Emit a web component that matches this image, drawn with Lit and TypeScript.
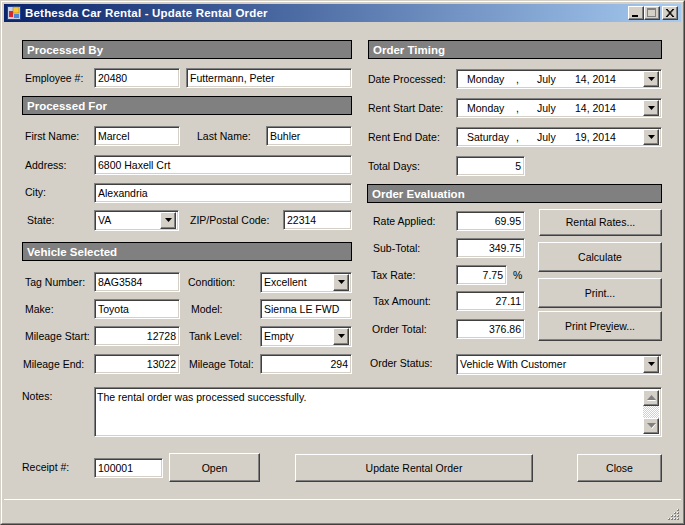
import { LitElement, html, css, svg } from "lit";
import { customElement } from "lit/decorators.js";

const arrow = html`<svg width="7" height="4" viewBox="0 0 7 4"><polygon points="0,0 7,0 3.5,4" fill="#000"></polygon></svg>`;

@customElement("app-root")
export class AppRoot extends LitElement {
  static styles = css`
    :host {
      display: block;
      width: 685px;
      height: 525px;
      box-sizing: border-box;
      border: 1px solid;
      border-color: #d4d0c8 #404040 #404040 #d4d0c8;
      background: #d4d0c8;
      font: 10.5px/13px "Liberation Sans", Arial, sans-serif;
      color: #000;
      overflow: hidden;
    }
    .win {
      height: 100%;
      box-sizing: border-box;
      border: 1px solid;
      border-color: #fff #808080 #808080 #fff;
      padding: 2px;
      display: flex;
      flex-direction: column;
    }
    .titlebar {
      height: 18px;
      flex: none;
      display: flex;
      align-items: center;
      background: linear-gradient(90deg, #0a246a, #a6caf0);
      padding: 0 3px 0 3px;
    }
    .app-icon { width: 14px; height: 14px; flex: none; }
    .title {
      margin-left: 4px;
      color: #fff;
      font: bold 11.5px/18px "Liberation Sans", Arial, sans-serif;
      letter-spacing: 0.2px;
      white-space: nowrap;
    }
    .wbtns { margin-left: auto; display: flex; }
    .wbtn { width: 16px; height: 14px; box-sizing: border-box; display: block; }
    .wbtn.close { margin-left: 2px; }
    .raised {
      background: #d4d0c8;
      border: 1px solid;
      border-color: #fff #404040 #404040 #fff;
      box-shadow: inset -1px -1px 0 #808080;
    }
    .sunken {
      background: #fff;
      box-sizing: border-box;
      border: 1px solid;
      border-color: #808080 #fff #fff #808080;
      box-shadow: inset 1px 1px 0 #404040, inset -1px -1px 0 #d4d0c8;
    }
    .form { padding: 18px 19px 0 18px; flex: 1; min-height: 0; }
    .cols { display: flex; gap: 16px; }
    .left { width: 330px; flex: none; }
    .right { width: 294px; flex: none; }
    .head {
      height: 19px;
      box-sizing: border-box;
      background: #808080;
      border: 1px solid #000;
      color: #fff;
      font: bold 11.5px/18px "Liberation Sans", Arial, sans-serif;
      padding-left: 4px;
      white-space: nowrap;
    }
    .head.wide { margin-left: -1px; }
    .row { display: flex; align-items: center; height: 20px; }
    .lbl { flex: none; white-space: nowrap; box-sizing: border-box; }
    .l72 { width: 72px; }
    .l88 { width: 88px; }
    .l86 { width: 86px; }
    .l80 { width: 80px; }
    .l104 { width: 104px; }
    .p1 { padding-left: 1px; }
    .p2 { padding-left: 2px; }
    .p3 { padding-left: 3px; }
    .p4 { padding-left: 4px; }
    .p5 { padding-left: 5px; }
    .p8 { padding-left: 8px; }
    .p9 { padding-left: 9px; }
    .p11 { padding-left: 11px; }
    .p17 { padding-left: 17px; }
    .up1 { margin-top: -2px; }
    .m3 { margin-top: 3px; }
    .m6 { margin-top: 6px; }
    .m7 { margin-top: 7px; }
    .m8 { margin-top: 8px; }
    .m9 { margin-top: 9px; }
    .m10 { margin-top: 10px; }
    .m11 { margin-top: 11px; }
    .m12 { margin-top: 12px; }
    .m13 { margin-top: 13px; }
    .f {
      height: 20px;
      flex: none;
      line-height: 16px;
      padding: 1px 3px 0 3px;
      white-space: nowrap;
      overflow: hidden;
    }
    .grow { flex: 1; min-width: 0; }
    .w86 { width: 86px; }
    .w85 { width: 85px; }
    .w92 { width: 92px; }
    .w69 { width: 69px; }
    .w51 { width: 51px; }
    .num { text-align: right; padding-right: 3px; }
    .gap6 { margin-left: 6px; }
    .select {
      display: flex;
      align-items: center;
      justify-content: space-between;
      padding: 0 2px 0 3px;
      height: 21px;
    }
    .ddb {
      width: 16px;
      height: 17px;
      flex: none;
      box-sizing: border-box;
      display: flex;
      align-items: center;
      justify-content: center;
    }
    .date {
      width: 206px;
      height: 20px;
      padding: 0 2px 0 10px;
      display: grid;
      grid-template-columns: 49px 21px 38px 1fr 16px;
      align-items: center;
    }
    .date .ddb { height: 16px; }
    .eval { display: flex; }
    .fields { width: 157px; flex: none; padding-top: 2px; }
    .buttons { width: 124px; margin-left: 13px; flex: none; }
    .btn {
      box-sizing: border-box;
      display: flex;
      align-items: center;
      justify-content: center;
      white-space: nowrap;
    }
    .buttons .btn { width: 124px; }
    .buttons .b27 { height: 27px; margin-left: 1px; width: 123px; }
    .b30 { height: 30px; }
    .pct { margin-left: 6px; }
    .notes { display: flex; margin-top: 13px; height: 50px; }
    .notes .lbl { padding-top: 3px; }
    .memo {
      flex: 1;
      display: flex;
      padding: 2px;
      min-width: 0;
    }
    .memo-text { flex: 1; line-height: 14px; }
    .sb { width: 16px; flex: none; display: flex; flex-direction: column; }
    .sbb {
      height: 16px;
      flex: none;
      box-sizing: border-box;
      display: flex;
      align-items: center;
      justify-content: center;
    }
    .track {
      flex: 1;
      background: repeating-conic-gradient(#fff 0 25%, #d4d0c8 0 50%) 0 0 / 2px 2px;
    }
    .actions { display: flex; align-items: center; height: 29px; margin-top: 16px; }
    .open { width: 91px; height: 29px; margin-left: 6px; padding-top: 1px; }
    .update { width: 238px; height: 28px; margin: 1px 0 0 35px; }
    .closeb { width: 85px; height: 28px; margin: 1px 0 0 44px; }
    .status {
      height: 22px;
      flex: none;
      box-sizing: border-box;
      border-top: 1px solid #fff;
      display: flex;
      justify-content: flex-end;
      align-items: flex-end;
      padding: 0 1px 1px 0;
    }
  `;

  private label(text: string, cls: string) {
    return html`<span class="lbl ${cls}">${text}</span>`;
  }

  private select(text: string, cls: string) {
    return html`<div class="sunken select ${cls}">
      <span>${text}</span>
      <span class="raised ddb">${arrow}</span>
    </div>`;
  }

  private dateRow(label: string, day: string, month: string, rest: string, cls: string) {
    return html`<div class="row ${cls}">
      ${this.label(label, "l88")}
      <div class="sunken select date">
        <span>${day}</span><span>,</span><span>${month}</span><span>${rest}</span>
        <span class="raised ddb">${arrow}</span>
      </div>
    </div>`;
  }

  private money(label: string, value: string, lcls: string, cls: string) {
    return html`<div class="row ${cls}">
      ${this.label(label, `l88 ${lcls}`)}
      <div class="sunken f w69 num">${value}</div>
    </div>`;
  }

  render() {
    return html`<div class="win">
      <div class="titlebar">
        <svg class="app-icon" viewBox="0 0 14 14">
          <rect x="0.5" y="0.5" width="13" height="13" fill="#c8d0e8" stroke="#1f3f8f" stroke-width="1"></rect>
          <rect x="2" y="5" width="4" height="6" fill="#d8262a"></rect>
          <rect x="6" y="1" width="6" height="6" fill="#f6c838" stroke="#a07810" stroke-width="0.5"></rect>
          <rect x="7" y="8" width="5" height="4" fill="#4f88d8"></rect>
        </svg>
        <span class="title">Bethesda Car Rental - Update Rental Order</span>
        <div class="wbtns">
          <svg class="wbtn raised" viewBox="0 0 14 12"><rect x="3" y="8" width="6" height="2" fill="#000"></rect></svg>
          <svg class="wbtn raised" viewBox="0 0 14 12"><rect x="2.5" y="1.5" width="8" height="8" fill="none" stroke="#808080"></rect><rect x="2" y="1" width="9" height="2" fill="#808080"></rect></svg>
          <svg class="wbtn raised close" viewBox="0 0 14 12"><path d="M3 2 L10 10 M10 2 L3 10 M4 2 L11 10 M11 2 L4 10" stroke="#000" fill="none"></path></svg>
        </div>
      </div>

      <div class="form">
        <div class="cols">
          <div class="left">
            <div class="head">Processed By</div>
            <div class="row m9">
              ${this.label("Employee #:", "l72 p3")}
              <div class="sunken f w86">20480</div>
              <div class="sunken f grow gap6">Futtermann, Peter</div>
            </div>
            <div class="head m8">Processed For</div>
            <div class="row m11">
              ${this.label("First Name:", "l72 p3")}
              <div class="sunken f w86">Marcel</div>
              ${this.label("Last Name:", "l86 p17")}
              <div class="sunken f w86">Buhler</div>
            </div>
            <div class="row m9">
              ${this.label("Address:", "l72 p3")}
              <div class="sunken f grow">6800 Haxell Crt</div>
            </div>
            <div class="row m8">
              ${this.label("City:", "l72 p3 up1")}
              <div class="sunken f grow">Alexandria</div>
            </div>
            <div class="row m7">
              ${this.label("State:", "l72 p5")}
              ${this.select("VA", "w85")}
              ${this.label("ZIP/Postal Code:", "l104 p11")}
              <div class="sunken f w69">22314</div>
            </div>
            <div class="head m12">Vehicle Selected</div>
            <div class="row m11">
              ${this.label("Tag Number:", "l72 p3")}
              <div class="sunken f w86">8AG3584</div>
              ${this.label("Condition:", "l80 p8")}
              ${this.select("Excellent", "w92")}
            </div>
            <div class="row m7">
              ${this.label("Make:", "l72 p3")}
              <div class="sunken f w86">Toyota</div>
              ${this.label("Model:", "l80 p11")}
              <div class="sunken f w92">Sienna LE FWD</div>
            </div>
            <div class="row m7">
              ${this.label("Mileage Start:", "l72 p3")}
              <div class="sunken f w86 num">12728</div>
              ${this.label("Tank Level:", "l80 p9")}
              ${this.select("Empty", "w92")}
            </div>
            <div class="row m8">
              ${this.label("Mileage End:", "l72 p1")}
              <div class="sunken f w86 num">13022</div>
              ${this.label("Mileage Total:", "l80 p9")}
              <div class="sunken f w92 num">294</div>
            </div>
          </div>

          <div class="right">
            <div class="head">Order Timing</div>
            ${this.dateRow("Date Processed:", "Monday", "July", "14, 2014", "m10")}
            ${this.dateRow("Rent Start Date:", "Monday", "July", "14, 2014", "m9")}
            ${this.dateRow("Rent End Date:", "Saturday", "July", "19, 2014", "m9")}
            <div class="row m9">
              ${this.label("Total Days:", "l88")}
              <div class="sunken f w69 num">5</div>
            </div>
            <div class="head wide m8">Order Evaluation</div>
            <div class="eval m6">
              <div class="fields">
                ${this.money("Rate Applied:", "69.95", "p5", "")}
                ${this.money("Sub-Total:", "349.75", "p5", "m7")}
                <div class="row m7">
                  ${this.label("Tax Rate:", "l88 p3")}
                  <div class="sunken f w51 num">7.75</div>
                  <span class="pct">%</span>
                </div>
                ${this.money("Tax Amount:", "27.11", "p5", "m6")}
                ${this.money("Order Total:", "376.86", "p4", "m8")}
              </div>
              <div class="buttons">
                <div class="raised btn b27">Rental Rates...</div>
                <div class="raised btn b30 m6">Calculate</div>
                <div class="raised btn b30 m6">Print...</div>
                <div class="raised btn b30 m3">
                  <span>Print Pre<u>v</u>iew...</span>
                </div>
              </div>
            </div>
            <div class="row m13">
              ${this.label("Order Status:", "l88 p2 up1")}
              ${this.select("Vehicle With Customer", "grow")}
            </div>
          </div>
        </div>

        <div class="notes">
          ${this.label("Notes:", "l72")}
          <div class="sunken memo">
            <div class="memo-text">The rental order was processed successfully.</div>
            <div class="sb">
              <div class="raised sbb">
                <svg width="9" height="6" viewBox="0 0 9 6"><polygon points="4.5,1 8,5 9,6 0,6 1,5" fill="#fff"></polygon><polygon points="4.5,0 9,5 0,5" fill="#808080"></polygon></svg>
              </div>
              <div class="track"></div>
              <div class="raised sbb">
                <svg width="9" height="6" viewBox="0 0 9 6"><polygon points="1,1 9,1 5,6" fill="#fff"></polygon><polygon points="0,0 9,0 4.5,5" fill="#808080"></polygon></svg>
              </div>
            </div>
          </div>
        </div>

        <div class="actions">
          ${this.label("Receipt #:", "l72")}
          <div class="sunken f w69">100001</div>
          <div class="raised btn open">Open</div>
          <div class="raised btn update">Update Rental Order</div>
          <div class="raised btn closeb">Close</div>
        </div>
      </div>

      <div class="status">
        <svg width="12" height="12" viewBox="0 0 12 12">
          ${[[9, 1], [6, 4], [9, 4], [3, 7], [6, 7], [9, 7], [0, 10], [3, 10], [6, 10], [9, 10]].map(
            ([x, y]) => svg`<rect x=${x} y=${y} width="2" height="2" fill="#808080"></rect><rect x=${x} y=${y} width="1" height="1" fill="#fff"></rect>`
          )}
        </svg>
      </div>
    </div>`;
  }
}
